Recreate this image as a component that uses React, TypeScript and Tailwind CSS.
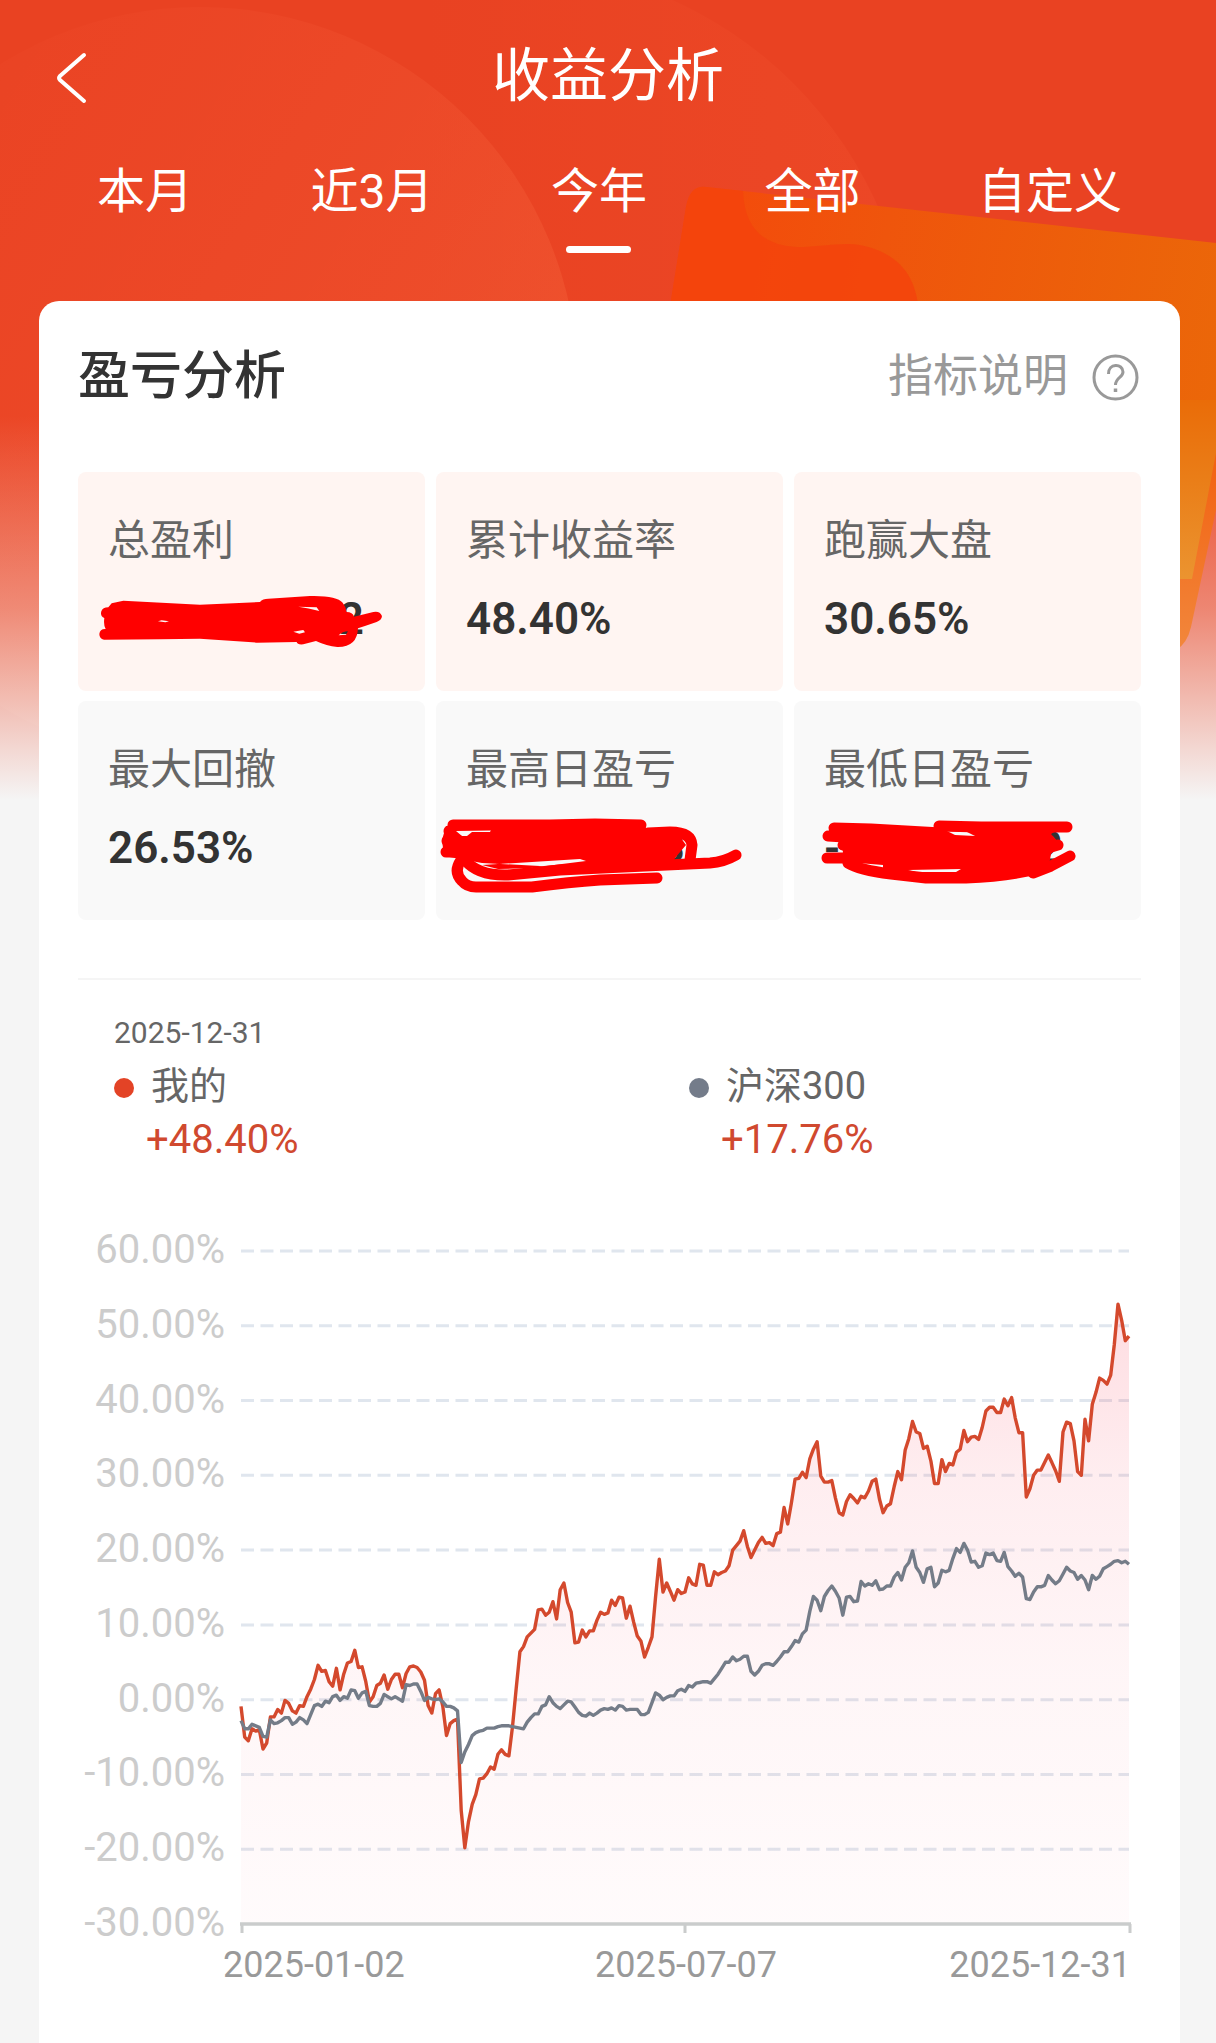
import { useState } from 'react';
import clsx from 'clsx';

interface Metric {
  label: string;
  value?: string;
  // what still shows at either end of a scribbled-out value
  edges?: [string, string];
  edgesWidth?: string;
  scribble?: 'profit' | 'best' | 'worst';
  warm?: boolean;
}

const TABS = ['本月', '近3月', '今年', '全部', '自定义'];

const METRICS: Metric[] = [
  { label: '总盈利', edges: ['', '2'], edgesWidth: 'w-[256px]', scribble: 'profit', warm: true },
  { label: '累计收益率', value: '48.40%', warm: true },
  { label: '跑赢大盘', value: '30.65%', warm: true },
  { label: '最大回撤', value: '26.53%' },
  { label: '最高日盈亏', edges: ['', '3'], edgesWidth: 'w-[219px]', scribble: 'best' },
  { label: '最低日盈亏', edges: ['-', '2'], edgesWidth: 'w-[239px]', scribble: 'worst' },
];

const LEGEND = [
  { name: '我的', value: '+48.40%', dot: 'bg-[#e34326]' },
  { name: '沪深300', value: '+17.76%', dot: 'bg-[#747c8a]' },
];

const Y_TICKS = [60, 50, 40, 30, 20, 10, 0, -10, -20, -30];
const X_TICKS = ['2025-01-02', '2025-07-07', '2025-12-31'];

// Cumulative return in percent, one value per trading day
const MINE = [
  -0.9, -5, -5.5, -3.9, -4.2, -4, -6.6, -5.8, -2.3, -2.3, -1.3, -1.8, -0.1, -0.5, -1.5, -1.8, -0.8, -0.9, 0.4, 1.4,
  2.7, 4.6, 3.8, 3.9, 2.4, 1.8, 4.2, 1.3, 3.4, 4.9, 5.1, 6.6, 4.3, 4.4, 2.4, -0.3, 0.4, 1.9, 2.2, 3.3,
  1.4, 2.7, 3.4, 3.4, 1.6, 3.5, 4.4, 4.5, 4.3, 3.7, 2.6, -0.8, -1.8, 0.8, 1.3, -0.9, -4.8, -3.2, -2.8, -2.6,
  -14.8, -19.8, -16.3, -14, -12.7, -10.6, -10.5, -9.9, -9, -9.3, -7.3, -6.7, -7.3, -7.5, -3.6, 1.5, 6.4, 7.1, 8.4, 8.9,
  9.4, 12, 12.1, 11.3, 11.7, 13.1, 10.8, 14.7, 15.6, 13, 11.7, 7.6, 7.7, 9.3, 8.4, 9.2, 9.2, 10.6, 11.7, 11.4,
  11.6, 13.3, 12.6, 13.7, 13.6, 10.9, 12.5, 10.4, 8.5, 7.8, 5.7, 7, 8.4, 13.8, 18.8, 14.4, 15.6, 14.5, 13.3, 14.7,
  14.2, 14.4, 16.3, 15.5, 15.3, 18.1, 18, 15.3, 15.3, 17.1, 16.7, 17, 17.2, 17.9, 20, 20.6, 21.2, 22.6, 20.5, 19,
  20, 21, 21.7, 20.9, 21, 20.6, 22.2, 22.4, 25.7, 23.5, 26.3, 29.5, 29.6, 30.4, 29.7, 32.2, 33.5, 34.5, 29.9, 29.1,
  29.1, 29.3, 27, 25, 24.7, 26.5, 27.4, 26.9, 26.3, 27.2, 27, 27.9, 29.2, 29.5, 26.8, 25, 25.9, 26.2, 28.5, 30.5,
  29.4, 33.4, 34.9, 37.2, 35.8, 35.6, 33.6, 33.9, 31.9, 28.9, 28.9, 32.1, 30.5, 31.6, 31.4, 33.1, 33.5, 36, 34.5, 35.1,
  35.2, 34.8, 36.4, 38.6, 39.1, 39.1, 38.4, 38.4, 40.2, 39.3, 40.4, 37.7, 35.7, 35.7, 27.1, 28.2, 30, 30.7, 30.7, 31.7,
  32.7, 31.7, 30.6, 29.2, 35.8, 37.1, 36.9, 34.6, 30.5, 30, 37.5, 34.6, 39.5, 41.1, 43, 42.7, 42.2, 43.4, 47.5, 52.9,
  50.7, 48, 48.6,
];

const CSI300 = [
  -2.8, -3.9, -3.9, -3.3, -3.5, -3.7, -4.9, -5, -2.7, -3.2, -3.1, -2.8, -2.4, -2.4, -3.3, -3, -2.4, -2.7, -3.2, -2,
  -0.8, -0.6, -0.9, -0.2, -0.4, 0.4, 0.6, -0.1, 0.4, 0.2, 1.3, 1.2, 0.2, 0.9, 1.1, -0.8, -0.9, -0.9, -0.5, 0.7,
  0.4, 0.1, 0.4, 0.1, -0.2, 2, 1.9, 2.1, 2.1, 1.1, -0.1, 0.3, 0.1, 0, 0.1, -0.3, -0.9, -0.9, -1.1, -1.5,
  -8.4, -7, -6, -4.8, -4.4, -4.2, -4.1, -3.8, -3.8, -3.8, -3.6, -3.5, -3.5, -3.5, -3.6, -3.7, -3.8, -3.9, -3, -2.4,
  -1.9, -1.9, -0.9, -0.7, 0.4, -0.4, -0.9, -1.2, -0.7, -0.2, -0.3, -1, -1.7, -2.1, -2.2, -1.8, -2.1, -1.8, -1.4, -1.2,
  -1.3, -1.1, -1.4, -0.8, -0.9, -1.4, -1.3, -1.3, -1.3, -2, -2, -1.7, -0.4, 0.9, 0.6, 0, 0.3, 0.5, 0.5, 1.2,
  1.4, 1.1, 1.9, 1.7, 2.2, 2.3, 2.4, 2.4, 2.2, 2.8, 3.4, 4.2, 5, 5, 5.7, 5.2, 5.4, 5.8, 5.8, 3.8,
  3.3, 3.8, 4.6, 4.8, 4.8, 4.6, 5.1, 5.7, 6.4, 6.4, 7.1, 7.9, 7.7, 8.8, 9.3, 11.8, 13.8, 13.3, 11.9, 13.8,
  14.6, 15.2, 14.5, 13.6, 11.3, 13.7, 13.8, 13.1, 13.2, 15.8, 15.2, 15.5, 15.3, 15.9, 14.7, 14.8, 15.2, 15.2, 16.4, 17,
  16, 17.7, 18.3, 19.9, 17.7, 17, 15.7, 17.5, 17.7, 15.1, 15.6, 17.3, 17.1, 17.3, 18.9, 20.2, 19.7, 20.9, 20, 18.4,
  18.5, 17.7, 17.9, 19.6, 19.4, 19.6, 18.6, 18.5, 19.7, 17.8, 17.2, 16.5, 16.9, 16.4, 13.5, 13.4, 14.4, 15.1, 15.1, 15.3,
  16.6, 16, 15.5, 15.9, 16.8, 17.7, 17.2, 17, 16.1, 16.6, 16, 14.7, 16.6, 16.1, 16.5, 17.5, 17.8, 18.1, 18.5, 18.6,
  18.3, 18.5, 18.1,
];

const PLOT_W = 888;
const PLOT_H = 673;

const yOf = (pct: number) => ((60 - pct) / 90) * PLOT_H;

function toPoints(values: number[]) {
  return values
    .map((v, i) => `${((i / (values.length - 1)) * PLOT_W).toFixed(1)},${yOf(v).toFixed(1)}`)
    .join(' ');
}

function HeaderArt() {
  return (
    <svg
      className="absolute inset-x-0 top-0 h-[800px] w-full"
      viewBox="0 0 1216 800"
      preserveAspectRatio="none"
      aria-hidden="true"
    >
      <defs>
        <linearGradient id="glow" x1="0" y1="0" x2="1" y2="0.6">
          <stop offset="0.2" stopColor="#ff6040" stopOpacity="0.06" />
          <stop offset="1" stopColor="#ff8050" stopOpacity="0.24" />
        </linearGradient>
        <linearGradient id="glowFar" x1="0" y1="0" x2="1" y2="0">
          <stop offset="0.4" stopColor="#ff6a40" stopOpacity="0" />
          <stop offset="1" stopColor="#ff6a40" stopOpacity="0.14" />
        </linearGradient>
        <linearGradient id="fade" x1="0" y1="0" x2="0" y2="1">
          <stop offset="0.52" stopColor="#f5f5f5" stopOpacity="0" />
          <stop offset="0.76" stopColor="#f5f5f5" stopOpacity="0.38" />
          <stop offset="1" stopColor="#f5f5f5" />
        </linearGradient>
        <linearGradient id="amber" x1="680" y1="300" x2="1216" y2="400" gradientUnits="userSpaceOnUse">
          <stop offset="0" stopColor="#f44a0b" />
          <stop offset="0.35" stopColor="#ef550c" />
          <stop offset="1" stopColor="#eb6709" />
        </linearGradient>
        <linearGradient id="amberEdge" x1="0" y1="400" x2="0" y2="580" gradientUnits="userSpaceOnUse">
          <stop offset="0" stopColor="#ea6c08" />
          <stop offset="0.45" stopColor="#ea7e18" />
          <stop offset="1" stopColor="#eb9430" />
        </linearGradient>
        <linearGradient id="amberBack" x1="0" y1="450" x2="0" y2="650" gradientUnits="userSpaceOnUse">
          <stop offset="0" stopColor="#f2600f" />
          <stop offset="1" stopColor="#f2873c" />
        </linearGradient>
      </defs>
      <rect width="1216" height="800" fill="#e94222" />
      <circle cx="505" cy="372" r="408" fill="url(#glowFar)" />
      <circle cx="200" cy="385" r="378" fill="url(#glow)" />
      <rect width="1216" height="800" fill="url(#fade)" />
      <path d="M1160 400 H1216 V510 L1191 627 Q1187 644 1176 650 L1160 645 Z" fill="url(#amberBack)" />
      <path d="M671 300 L686 207 Q690 185 706 187 L1216 243 V400 H671 Z" fill="url(#amber)" />
      <path
        d="M671 300 L686 207 Q690 185 706 187 L743 191 Q745 245 797 247 C830 247 850 238 880 251 C908 264 916 285 919 310 L671 310 Z"
        fill="#f4420c"
        fillOpacity="0.8"
      />
      <path d="M1160 400 H1216 V453 L1192 579 H1160 Z" fill="url(#amberEdge)" />
    </svg>
  );
}

function Scribble({ kind }: { kind: NonNullable<Metric['scribble']> }) {
  return (
    <svg
      className="absolute left-0 top-0 h-[219px] w-[347px] overflow-visible"
      viewBox="0 0 347 219"
      fill="none"
      stroke="#ff0000"
      strokeLinecap="round"
      strokeLinejoin="round"
      aria-hidden="true"
    >
      {kind === 'profit' && (
        <g transform="translate(-18 108) scale(0.3333)">
          <path
            fill="#ff0000"
            fillRule="evenodd"
            stroke="none"
            d="M155 70 L190 62 L420 74 L600 66 Q608 56 625 56 L750 48 Q830 46 848 68 Q858 80 860 96 Q878 96 882 110 L940 96 Q960 92 966 108 Q966 120 950 126 L915 138 L894 145 Q892 202 832 201 Q800 198 768 183 L730 193 Q712 195 710 186 L590 188 L420 176 L300 178 L132 179 Q118 176 118 162 Q120 146 137 147 Q130 135 133 114 Q120 108 124 94 Q128 82 145 82 Z M715 80 L770 82 L778 93 Q745 84 715 80 Z M836 166 Q848 154 864 154 L858 164 Z M700 155 L730 150 L735 157 L718 161 Z M294 124 L305 121 L327 124 L316 127 Z"
          />
        </g>
      )}
      {kind === 'best' && (
        <g transform="translate(-16 89)" strokeWidth="11">
          <path
            fill="#ff0000"
            stroke="none"
            fillRule="evenodd"
            d="M26 36 L222 30 L227 40 L258 44 L266 55 L255 68 L250 80 L180 78 L120 76 L62 73 L24 66 L22 50 Z M36 41 L71 40 L70 42 L52 42 L47 46 L42 46 Z M62 75 L160 69 L166 71 L110 78 L78 79 Z"
          />
          <path d="M33 35 L130 35 L175 34 L221 35" />
          <path d="M29 41 L34 49 M27 51 L40 51 M26 62 L50 62" />
          <path d="M228 43 L250 42 Q271 42 272 55 L270 70" />
          <path d="M45 70 Q58 86 88 85 L140 80 L225 76 L290 73 Q304 72 316 65" />
          <path d="M41 70 Q33 82 42 91 Q47 97 56 97 L112 97 Q150 92 180 90 L237 88" />
        </g>
      )}
      {kind === 'worst' && (
        <g transform="translate(-373 89)" strokeWidth="11">
          <path
            fill="#ff0000"
            stroke="none"
            fillRule="evenodd"
            d="M412 38 L510 40 L640 38 L630 44 L640 55 L630 64 L628 75 L600 85 L540 86 L480 84 L430 76 L420 70 L422 62 L418 46 Z M526 41 L546 42 L554 46 L534 45 Z M487 80 L540 79 L535 82 L495 82 Z M437 73 L462 75 L462 79 Z"
          />
          <path d="M413 38 L450 39 L520 43 M407 46 L440 48 M406 68 L430 68 M422 55 L440 56" />
          <path d="M518 36 L560 37 L646 37 M637 55 L620 60" />
          <path d="M427 73 Q438 80 470 84 L505 88 L545 88 Q590 86 620 78" />
          <path d="M612 83 L630 76 L649 66" />
        </g>
      )}
    </svg>
  );
}

function MetricCard({ metric }: { metric: Metric }) {
  return (
    <div
      className={clsx(
        'relative rounded-lg pt-[41px] pr-4 pb-11 pl-[30px]',
        metric.warm ? 'bg-[#fff5f2]' : 'bg-[#f9f9f9]'
      )}
    >
      <dt className="text-[42px] leading-[56px] whitespace-nowrap text-[#666]">{metric.label}</dt>
      <dd className="mt-[22px] text-[44px] leading-[56px] font-semibold text-[#333]">
        {metric.edges ? (
          <span className={clsx('flex justify-between', metric.edgesWidth)}>
            <span>{metric.edges[0]}</span>
            <span>{metric.edges[1]}</span>
          </span>
        ) : (
          metric.value
        )}
      </dd>
      {metric.scribble && <Scribble kind={metric.scribble} />}
    </div>
  );
}

function ReturnChart() {
  const mine = toPoints(MINE);

  return (
    <div className="mt-[62px]">
      <div className="flex gap-4 pr-[10px]">
        <ul className="flex h-[717px] w-[147px] shrink-0 flex-col justify-between text-right text-[40px] leading-[44px] text-[#ccc]">
          {Y_TICKS.map((tick) => (
            <li key={tick}>{tick.toFixed(2)}%</li>
          ))}
        </ul>
        <svg
          className="mt-[23px] h-[683px] min-w-0 flex-1 overflow-visible"
          viewBox="0 0 890 683"
          preserveAspectRatio="none"
          fill="none"
          role="img"
          aria-label="收益率走势"
        >
          <defs>
            <linearGradient id="area" x1="0" y1="53" x2="0" y2={PLOT_H} gradientUnits="userSpaceOnUse">
              <stop offset="0" stopColor="#f8304c" stopOpacity="0.17" />
              <stop offset="0.28" stopColor="#f8304c" stopOpacity="0.085" />
              <stop offset="0.6" stopColor="#f8304c" stopOpacity="0.045" />
              <stop offset="1" stopColor="#f8304c" stopOpacity="0.02" />
            </linearGradient>
          </defs>
          {Y_TICKS.slice(0, -1).map((tick) => (
            <line
              key={tick}
              x1="0"
              x2={PLOT_W}
              y1={yOf(tick)}
              y2={yOf(tick)}
              stroke="#e0e6ee"
              strokeWidth="3"
              strokeDasharray="13 6.5"
            />
          ))}
          <polygon points={`0,${PLOT_H} ${mine} ${PLOT_W},${PLOT_H}`} fill="url(#area)" />
          <polyline points={mine} stroke="#d4492d" strokeWidth="3.4" strokeLinejoin="round" />
          <polyline points={toPoints(CSI300)} stroke="#747c88" strokeWidth="3.4" strokeLinejoin="round" />
          <path d={`M-1 ${PLOT_H} H890`} stroke="#cacccc" strokeWidth="3.5" />
          <path d="M1 673 V682 M444 673 V682 M889 673 V682" stroke="#cacccc" strokeWidth="3" />
        </svg>
      </div>
      <div className="grid grid-cols-3 pr-[10px] pl-[163px] text-[36px] leading-[40px] whitespace-nowrap text-[#999]">
        <span className="-ml-[18px]">{X_TICKS[0]}</span>
        <span className="text-center">{X_TICKS[1]}</span>
        <span className="text-right">{X_TICKS[2]}</span>
      </div>
    </div>
  );
}

export default function App() {
  const [activeTab, setActiveTab] = useState('今年');

  return (
    <div className="relative flex min-h-screen flex-col bg-[#f5f5f5] [font-family:Roboto,'Noto_Sans_CJK_SC',sans-serif]">
      <HeaderArt />

      <header className="relative pt-[41px] text-white">
        <div className="grid grid-cols-[1fr_auto_1fr] items-center">
          <button type="button" aria-label="返回" className="ml-[54px] w-9 pt-1">
            <svg className="h-[54px] w-9" viewBox="0 0 36 54" fill="none" stroke="currentColor" strokeWidth="4">
              <path d="M30 4 L6 25 Q4 27 6 29 L30 50" strokeLinecap="round" strokeLinejoin="round" />
            </svg>
          </button>
          <h1 className="text-[58px] leading-[70px]">收益分析</h1>
        </div>

        <nav className="mt-[49px] flex justify-between pr-[94px] pl-[97px]">
          {TABS.map((tab) => (
            <button
              key={tab}
              type="button"
              onClick={() => setActiveTab(tab)}
              className="flex flex-col items-center gap-[22px] text-[48px] leading-[64px]"
            >
              {tab}
              <span className={clsx('h-[7px] w-[65px] rounded-full', tab === activeTab && 'bg-white')} />
            </button>
          ))}
        </nav>
      </header>

      <main className="relative mt-12 mr-9 ml-[39px] flex-1 rounded-t-[20px] bg-white px-[39px] pt-[41px] pb-14">
        <div className="flex items-center justify-between">
          <h2 className="text-[52px] leading-[70px] font-medium text-[#333]">盈亏分析</h2>
          <button type="button" className="flex items-center gap-6 text-[45px] leading-[70px] text-[#999]">
            指标说明
            <svg className="mr-[2px] h-[47px] w-[47px]" viewBox="0 0 47 47" fill="none" stroke="currentColor" strokeWidth="3">
              <circle cx="23.5" cy="23.5" r="21.5" />
              <path d="M16.5 20 C16 9 31 9 31 18 C31 23.500 23.500 23.500 23.500 31" />
              <path d="M23.5 34.5 V38" strokeWidth="3.5" />
            </svg>
          </button>
        </div>

        <dl className="mt-[60px] grid grid-cols-3 gap-x-[11px] gap-y-[10px]">
          {METRICS.map((metric) => (
            <MetricCard key={metric.label} metric={metric} />
          ))}
        </dl>

        <section className="mt-[58px] border-t-2 border-[#f5f5f5] pt-[33px]">
          <p className="pl-9 text-[30px] leading-[40px] text-[#666]">2025-12-31</p>
          <div className="mt-[7px] grid grid-cols-[575fr_452fr] pl-9">
            {LEGEND.map((item) => (
              <div key={item.name}>
                <div className="flex items-center gap-[17px] text-[38px] leading-[52px] text-[#666]">
                  <span className={clsx('mt-1 h-5 w-5 rounded-full', item.dot)} />
                  {item.name}
                </div>
                <p className="mt-[2px] pl-8 text-[40px] leading-[52px] text-[#d0492f]">{item.value}</p>
              </div>
            ))}
          </div>

          <ReturnChart />
        </section>
      </main>
    </div>
  );
}
